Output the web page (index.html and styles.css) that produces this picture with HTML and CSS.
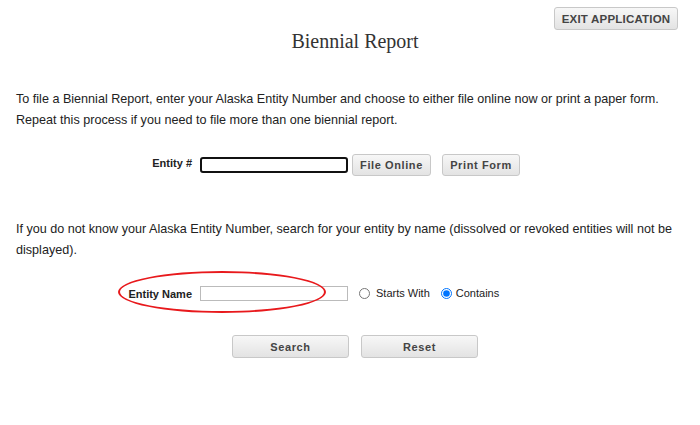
FILE: index.html
```html
<!DOCTYPE html>
<html>
<head>
<meta charset="utf-8">
<link rel="stylesheet" href="styles.css">
</head>
<body>
<div class="page">
  <div class="topbar">
    <button class="btn btn-exit">EXIT APPLICATION</button>
  </div>
  <h1 class="title">Biennial Report</h1>
  <p class="intro">To file a Biennial Report, enter your Alaska Entity Number and choose to either file online now or print a paper form. Repeat this process if you need to file more than one biennial report.</p>
  <div class="row row-entity">
    <label class="lbl">Entity #</label>
    <input class="field field-focus" type="text">
    <button class="btn btn-file">File Online</button>
    <button class="btn btn-print">Print Form</button>
  </div>
  <p class="intro intro2">If you do not know your Alaska Entity Number, search for your entity by name (dissolved or revoked entities will not be displayed).</p>
  <div class="row row-name">
    <span class="ellipse"></span>
    <label class="lbl">Entity Name</label>
    <input class="field field-name" type="text">
    <label class="opt"><input type="radio" name="m"> Starts With</label>
    <label class="opt opt2"><input type="radio" name="m" checked> Contains</label>
  </div>
  <div class="actions">
    <button class="btn btn-wide">Search</button>
    <button class="btn btn-wide">Reset</button>
  </div>
</div>
</body>
</html>
```

FILE: styles.css
```css
html, body {
  margin: 0;
  padding: 0;
  background: #fff;
}
body {
  font-family: "Liberation Sans", Arial, sans-serif;
  color: #222;
  width: 700px;
  height: 425px;
  overflow: hidden;
}
.page {
  padding: 0 0 0 16px;
}
.topbar {
  display: flex;
  justify-content: flex-end;
  padding: 7px 22px 0 0;
  height: 23px;
}
.btn {
  font-family: "Liberation Sans", Arial, sans-serif;
  font-weight: bold;
  font-size: 11px;
  color: #444;
  background: linear-gradient(#f7f7f7, #e3e3e3);
  border: 1px solid #c8c8c8;
  border-radius: 3px;
  padding: 0;
  height: 22px;
  letter-spacing: 0.6px;
}
.btn-exit {
  width: 124px;
  height: 23px;
  font-size: 11.5px;
  letter-spacing: 0.2px;
}
.title {
  font-family: "Liberation Serif", "Times New Roman", serif;
  font-weight: normal;
  font-size: 20px;
  color: #333;
  text-align: center;
  margin: -3px 0 0 -6px;
  height: 28px;
  line-height: 28px;
}
.intro {
  font-size: 12.6px;
  line-height: 21px;
  margin: 34px 0 0 0;
  padding-right: 20px;
}
.intro2 {
  margin-top: 43px;
}
.row {
  display: flex;
  align-items: center;
  position: relative;
}
.row-entity {
  margin-top: 23px;
  height: 22px;
}
.lbl {
  width: 176px;
  text-align: right;
  font-weight: bold;
  font-size: 11px;
  color: #222;
  margin-right: 8px;
}
.row-entity .lbl {
  position: relative;
  top: -2px;
}
.field {
  box-sizing: border-box;
  width: 148px;
  height: 15px;
  border: 1px solid #bbb;
  padding: 0;
  margin: 0;
  background: #fff;
}
.field-focus {
  height: 16px;
  border: 2px solid #111;
  border-radius: 3px;
}
.btn-file {
  width: 79px;
  margin-left: 4px;
}
.btn-print {
  width: 78px;
  margin-left: 11px;
}
.row-name {
  margin-top: 22px;
  height: 20px;
}
.row-name .lbl {
  position: relative;
  top: 1px;
}
.opt {
  display: flex;
  align-items: center;
  font-size: 11px;
  color: #222;
  margin-left: 11px;
}
.opt input {
  margin: 0 6px 0 0;
  width: 11px;
  height: 11px;
}
.opt2 {
  margin-left: 11px;
}
.opt2 input {
  margin-right: 4px;
}
.ellipse {
  position: absolute;
  left: 102px;
  top: -12px;
  width: 204px;
  height: 38px;
  border: 2px solid #e8191c;
  border-radius: 50%;
}
.actions {
  display: flex;
  justify-content: center;
  gap: 12px;
  margin-top: 32px;
  margin-left: -6px;
}
.btn-wide {
  width: 117px;
  height: 23px;
}
```
